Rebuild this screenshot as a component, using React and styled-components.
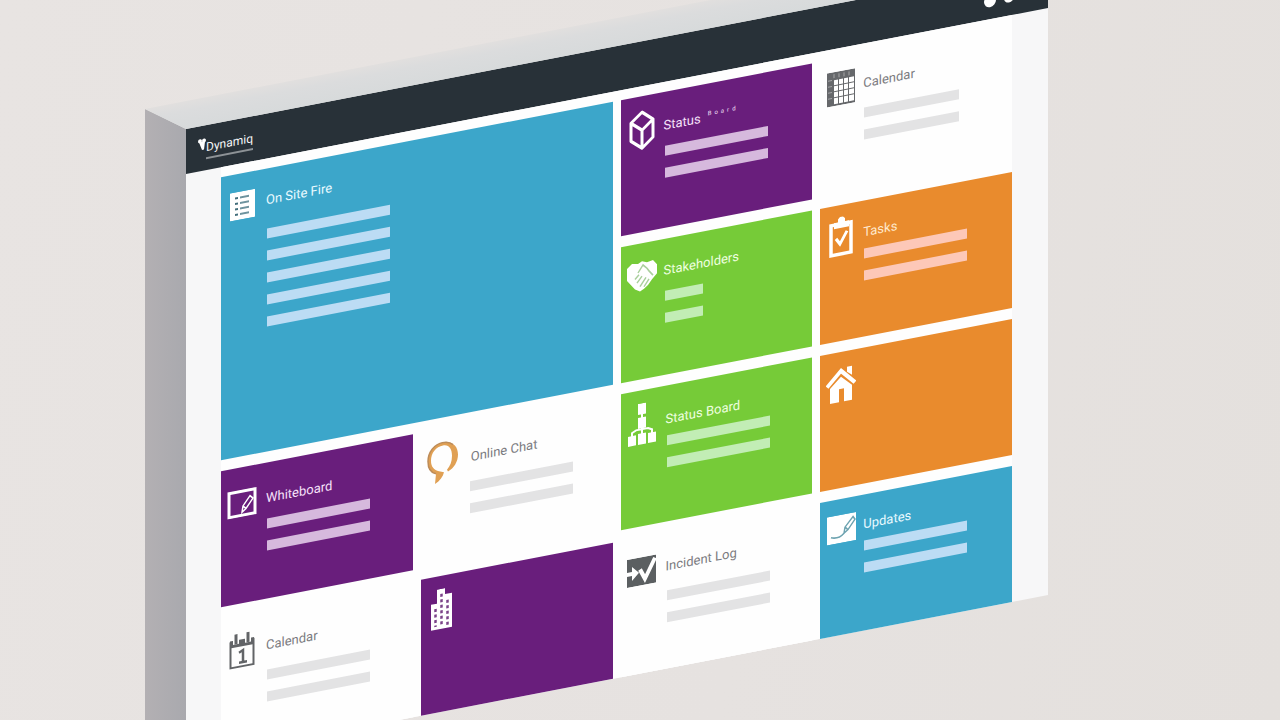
import React from 'react';
import styled, { createGlobalStyle } from 'styled-components';

const GlobalStyle = createGlobalStyle`
  * { box-sizing: border-box; }
  body {
    margin: 0;
    background: #e6e2e0;
    font-family: Roboto, "Liberation Sans", sans-serif;
  }
`;

const tones = {
  blue: { bg: '#3ca6ca', text: '#eafaff', bar: '#bcdcf4' },
  purple: { bg: '#691e7c', text: '#f6e2fa', bar: '#d6b9dd' },
  green: { bg: '#76cb38', text: '#efffe0', bar: '#c2edb5' },
  orange: { bg: '#e98b2d', text: '#ffe9cc', bar: '#fdc8b8' },
  white: { bg: '#fefefe', text: '#7b7b80', bar: '#e3e3e4' },
};

const Stage = styled.main`
  display: flex;
  align-items: flex-start;
  height: 100vh;
  padding: 129px 232px 0 145px;
  overflow: hidden;
  background: linear-gradient(100deg, #e8e4e2 0%, #e6e2e0 60%, #e4e0dd 100%);
`;

const SideFace = styled.div`
  flex: 0 0 41px;
  height: 100vh;
  background: linear-gradient(90deg, #b3b0b3, #a9a9ae);
  transform: skewY(26deg);
  transform-origin: top right;
`;

const Board = styled.div`
  position: relative;
  flex: 1;
  transform: skewY(-10.9deg);
  transform-origin: top left;
  background: #f7f7f8;
`;

const TopFace = styled.div`
  position: absolute;
  left: 0;
  right: 0;
  bottom: 100%;
  height: 28px;
  background: linear-gradient(180deg, #e1dfde 0%, #dbdcdd 35%, #d7dadb 100%);
  transform: skewX(55.7deg);
  transform-origin: bottom left;
`;

const Header = styled.header`
  display: flex;
  align-items: center;
  justify-content: space-between;
  height: 45px;
  padding: 0 34px 0 12px;
  background: #283138;
`;

const Brand = styled.div`
  display: flex;
  align-items: flex-start;
  color: #f4f6f7;
`;

const BrandName = styled.div`
  font-size: 12px;
  line-height: 20px;
  border-bottom: 2px solid #8d9296;
`;

const Actions = styled.div`
  display: flex;
  align-items: center;
  gap: 8px;
  padding-top: 8px;
`;

const Dot = styled.button`
  width: ${(p) => p.$size}px;
  height: ${(p) => p.$size}px;
  padding: 0;
  border: 0;
  border-radius: 50%;
  background: #fff;
`;

const Grid = styled.div`
  display: grid;
  grid-template-columns: repeat(4, 1fr);
  grid-auto-rows: 136px;
  gap: 11px 8px;
  margin: 0 36px 0 35px;
  padding-top: 10px;
  background: #fefefe;
`;

const TileBox = styled.section`
  grid-column: ${(p) => p.$col};
  grid-row: ${(p) => p.$row};
  padding: ${(p) => p.$pad}px 0 0 6px;
  background: ${(p) => tones[p.$tone].bg};
  color: ${(p) => tones[p.$tone].text};
`;

const TileHead = styled.div`
  display: flex;
  align-items: center;
  gap: ${(p) => p.$lead}px;
  height: 32px;
`;

const IconSlot = styled.div`
  display: flex;
  flex: 0 0 30px;
  align-items: center;
  justify-content: center;
  color: ${(p) => p.$color};
`;

const Title = styled.h2`
  margin: 0;
  font-size: 13px;
  line-height: 20px;
  font-weight: 400;
  white-space: nowrap;
`;

const Trail = styled.span`
  display: flex;
  align-self: flex-start;
  gap: 3px;
  font-size: 6px;
  line-height: 24px;
`;

const Bars = styled.div`
  display: grid;
  gap: 12px;
  width: ${(p) => p.$width}px;
  margin: ${(p) => p.$gap}px 0 0 ${(p) => p.$lead + 31}px;
`;

const Bar = styled.div`
  height: 10px;
  background: ${(p) => tones[p.$tone].bar};
`;

const Svg = ({ w, h, children }) => (
  <svg width={w} height={h} viewBox={`0 0 ${w} ${h}`} fill="none" aria-hidden="true">
    {children}
  </svg>
);

const ListIcon = () => (
  <Svg w={25} h={28}>
    <path d="M0 0h25v28H0z" fill="currentColor" />
    <path d="M5 6h3M5 11.500h3M5 17h3M5 22.500h3" stroke="#446f7c" strokeWidth="2" />
    <path d="M10 6h9M10 11.500h9M10 17h9M10 22.500h9" stroke="#6e939e" strokeWidth="2" />
  </Svg>
);

const CubeIcon = () => (
  <Svg w={26} h={40}>
    <path d="M13 2 24 11v18L13 38 2 29V11zM2 11l11 9 11-9M13 20v18" stroke="currentColor" strokeWidth="3" strokeLinejoin="round" />
  </Svg>
);

const SheetIcon = () => (
  <Svg w={28} h={34}>
    <path d="M0 0h28v34H0z" fill="#66686b" />
    <path
      d="M7 8h4v5H7zM12 8h4v5h-4zM17 8h4v5h-4zM22 8h5v5h-5zM7 14h4v5H7zM12 14h4v5h-4zM17 14h4v5h-4zM22 14h5v5h-5zM7 20h4v5H7zM12 20h4v5h-4zM17 20h4v5h-4zM22 20h5v5h-5zM7 26h4v6H7zM12 26h4v6h-4zM17 26h4v6h-4zM22 26h5v6h-5z"
      fill="#fff"
    />
    <path d="M1 8h4M1 14h4M1 20h4M1 26h4M7 2v4M12 2v4M17 2v4M22 2v4" stroke="#a5a6a8" />
  </Svg>
);

const HandsIcon = () => (
  <Svg w={30} h={34}>
    <path d="M0 8 5 4l6 1 4-2 5 2 6-1 4 5v9l-5 5-4 5-4 3-4 2-5-3-4-5-4-5-1-5z" fill="currentColor" />
    <path d="m11 14 5-7 4 4 2 3 4 5M8 20l4-4M10 24l5-6M13 28l6-8M17 29l5-7" stroke="#a9cf9c" strokeWidth="1.500" />
  </Svg>
);

const TreeIcon = () => (
  <Svg w={28} h={42}>
    <path d="M10 0h8v11h-8zM10 14h8v11h-8zM0 31h8v10H0zM10 30h8v11h-8zM20 31h8v10h-8z" fill="currentColor" />
    <path d="M14 10v21M4 32v-4l4-2h12l4 2v4" stroke="currentColor" strokeWidth="2" />
  </Svg>
);

const ClipboardIcon = () => (
  <Svg w={24} h={42}>
    <path d="M2 8h20v30H2z" stroke="currentColor" strokeWidth="3.500" />
    <path d="M5 6h4V3l2-2h3l2 2v3h4v6H5z" fill="currentColor" />
    <path d="m7 22 4 6 7-12" stroke="currentColor" strokeWidth="3" />
  </Svg>
);

const HomeIcon = () => (
  <Svg w={30} h={38}>
    <path d="M1 20 15 6l14 14" stroke="currentColor" strokeWidth="4" />
    <path d="M21 3h5v9l-5-4z" fill="currentColor" />
    <path d="m15 12 11 10v15h-8V24h-5v13H4V22z" fill="currentColor" />
  </Svg>
);

const BoardIcon = () => (
  <Svg w={30} h={28}>
    <path d="M2 2h26v24H2z" stroke="currentColor" strokeWidth="3" />
    <path d="m15 23 1-6 7-9 3 3-7 9zM16 17l3 3" stroke="currentColor" strokeWidth="1.500" />
  </Svg>
);

const ChatIcon = () => (
  <Svg w={32} h={42}>
    <path
      d="M16 1C7 1 1 8 1 17c0 7 3 12 8 14l-1 10c5-2 8-6 9-10l-5-2C7 27 4 23 4 17 4 9 9 4 16 4c6 0 9 5 9 12 0 6-2 10-5 13l1 2c6-2 10-8 10-15C31 7 25 1 16 1z"
      fill="#e0a054"
    />
    <path d="M9 31c-5-2-8-7-8-14C1 8 7 1 16 1c4 0 7 1 10 4" stroke="#bd8c59" strokeWidth="1.500" />
  </Svg>
);

const BuildingIcon = () => (
  <Svg w={21} h={42}>
    <path d="M0 14h6V0h8v6h7v34H0z" fill="currentColor" />
    <path d="M4.500 19v18M10.500 5v32M16.500 12v25" stroke="#7b4389" strokeWidth="2.500" strokeDasharray="3 2.500" />
  </Svg>
);

const DayIcon = () => (
  <Svg w={26} h={36}>
    <path d="M1.500 9h23v25h-23z" stroke="#626467" strokeWidth="2" />
    <path d="M1 7h24v7H1z" fill="#626467" />
    <path d="M7 1v10M19 1v10" stroke="#fff" strokeWidth="6" />
    <path d="M7 1v10M19 1v10" stroke="#626467" strokeWidth="3" />
    <path d="m10 20 4-2v12M10 30h8" stroke="#626467" strokeWidth="2.500" />
  </Svg>
);

const CheckIcon = () => (
  <Svg w={29} h={28}>
    <path d="M0 0h29v28H0z" fill="#5b5f61" />
    <path d="M0 13h5V8l7 7-7 7v-5H0z" fill="#fff" />
    <path d="m13 12 5 10L28 3" stroke="#fff" strokeWidth="4" />
  </Svg>
);

const NoteIcon = () => (
  <Svg w={29} h={28}>
    <path d="M0 0h29v28H0z" fill="currentColor" />
    <path d="M4 21c5 2 9 2 13-2M17 19l1-6 8-9 2 3-7 9-4 3M18 13l3 3" stroke="#6da3b0" strokeWidth="1.500" />
  </Svg>
);

const tiles = [
  { title: 'On Site Fire', tone: 'blue', icon: ListIcon, col: '1 / 3', row: '1 / 3', gap: 12, lead: 9, bars: 5, width: 123 },
  { title: 'Status', trail: 'Board', tone: 'purple', icon: CubeIcon, col: 3, row: 1, pad: 18, gap: 4 },
  { title: 'Calendar', tone: 'white', icon: SheetIcon, col: 4, row: 1, pad: 14, gap: 8, width: 95 },
  { title: 'Stakeholders', tone: 'green', icon: HandsIcon, col: 3, row: 2, gap: 4, width: 38 },
  { title: 'Tasks', tone: 'orange', icon: ClipboardIcon, col: 4, row: 2 },
  { title: 'Whiteboard', tone: 'purple', icon: BoardIcon, col: 1, row: 3, pad: 20, gap: 4, lead: 9 },
  { title: 'Online Chat', tone: 'white', icon: ChatIcon, col: 2, row: 3, pad: 18, gap: 8, lead: 12 },
  { title: 'Status Board', tone: 'green', icon: TreeIcon, col: 3, row: 3, pad: 18, lead: 9 },
  { tone: 'orange', icon: HomeIcon, col: 4, row: 3 },
  { title: 'Calendar', tone: 'white', icon: DayIcon, col: 1, row: 4, pad: 20, gap: 8, lead: 9 },
  { tone: 'purple', icon: BuildingIcon, col: 2, row: 4, pad: 18 },
  { title: 'Incident Log', tone: 'white', icon: CheckIcon, col: 3, row: 4, pad: 18, gap: 8, lead: 9 },
  { title: 'Updates', tone: 'blue', icon: NoteIcon, col: 4, row: 4, pad: 14 },
];

const Tile = ({ title, trail, tone, icon: Icon, col, row, pad = 16, gap = 0, lead = 7, bars = 2, width = 103 }) => (
  <TileBox $tone={tone} $col={col} $row={row} $pad={pad}>
    <TileHead $lead={lead}>
      <IconSlot $color={tone === 'white' ? '#626467' : '#fff'}>
        <Icon />
      </IconSlot>
      {title && <Title>{title}</Title>}
      {trail && (
        <Trail>
          {trail.split('').map((letter, i) => (
            <span key={i}>{letter}</span>
          ))}
        </Trail>
      )}
    </TileHead>
    {title && (
      <Bars $width={width} $gap={gap} $lead={lead}>
        {Array.from({ length: bars }, (_, i) => (
          <Bar key={i} $tone={tone} />
        ))}
      </Bars>
    )}
  </TileBox>
);

export default function App() {
  return (
    <>
      <GlobalStyle />
      <Stage>
        <SideFace />
        <Board>
          <TopFace />
          <Header>
            <Brand>
              <Svg w={8} h={14}>
                <circle cx="2" cy="3" r="2" fill="#fff" />
                <circle cx="6" cy="3" r="2" fill="#fff" />
                <path d="M1 4h6l-1 8H4z" fill="#fff" />
              </Svg>
              <BrandName>Dynamiq</BrandName>
            </Brand>
            <Actions>
              <Dot $size={12} aria-label="Notifications" />
              <Dot $size={10} aria-label="Account" />
            </Actions>
          </Header>
          <Grid>
            {tiles.map((tile, i) => (
              <Tile key={i} {...tile} />
            ))}
          </Grid>
        </Board>
      </Stage>
    </>
  );
}
